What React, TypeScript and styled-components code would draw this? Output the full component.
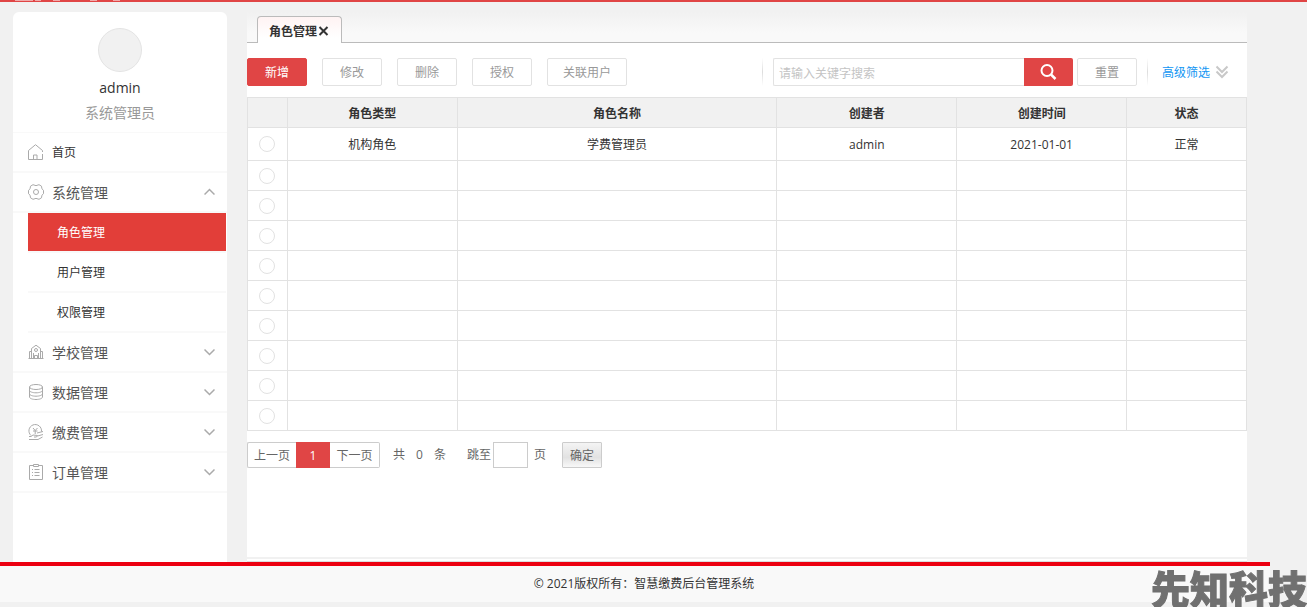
import React from "react";
import styled, { createGlobalStyle, css } from "styled-components";

const RED = "#e04545";
const LINE = "#e2e2e2";
const FAINT = "#f9f9f9";

const GlobalStyle = createGlobalStyle`
  *, *::before, *::after { box-sizing: border-box; }
  body {
    margin: 0;
    background: #f1f1f1;
    color: #333;
    font: 12px/20px "Open Sans", "Noto Sans CJK SC", sans-serif;
  }
  button, input { font: inherit; color: inherit; }
  button { cursor: pointer; }
  a { color: inherit; text-decoration: none; }
`;

const Page = styled.div`
  display: flex;
  flex-direction: column;
  min-height: 100vh;
  padding-bottom: 5px;
`;

const TopStrip = styled.header`
  height: 2px;
  background: ${RED};
  svg { display: block; }
`;

const Shell = styled.div`
  flex: 1;
  display: flex;
  gap: 20px;
  padding: 0 60px 0 13px;
`;

const Sidebar = styled.aside`
  flex: none;
  width: 214px;
  margin-top: 10px;
  background: #fff;
  border-radius: 6px 6px 0 0;
`;

const Profile = styled.div`
  display: flex;
  flex-direction: column;
  align-items: center;
  height: 120px;
  padding-top: 16px;
  font-size: 14px;
`;

const Avatar = styled.div`
  width: 44px;
  height: 44px;
  margin-bottom: 6px;
  border: 1px solid #e4e4e4;
  border-radius: 50%;
  background: #f1f1f1;
`;

const UserRole = styled.div`
  margin-top: 5px;
  color: #999;
`;

const MenuList = styled.ul`
  margin: 0;
  padding: 0;
  list-style: none;
  border-top: 1px solid ${FAINT};
`;

const MenuLink = styled.a<{ $small?: boolean }>`
  display: flex;
  align-items: center;
  height: 40px;
  padding: 0 12px 1px 15px;
  border-bottom: 2px solid ${FAINT};
  color: ${(p) => (p.$small ? "#333" : "#555")};
  font-size: ${(p) => (p.$small ? 12 : 14)}px;
`;

const MenuLabel = styled.span`
  flex: 1;
  margin-left: 8px;
  padding-top: 2px;
`;

const SubList = styled.ul`
  margin: 0 1px 0 15px;
  padding: 0;
  list-style: none;
`;

const SubLink = styled.a<{ $active?: boolean }>`
  display: flex;
  align-items: center;
  height: 40px;
  padding: 2px 0 0 29px;
  border-bottom: 2px solid ${FAINT};
  ${(p) =>
    p.$active &&
    css`
      background: #e23e39;
      background-clip: padding-box;
      color: #fff;
    `}
`;

const Main = styled.main`
  flex: 1;
  min-width: 0;
  display: flex;
  flex-direction: column;
  padding-top: 10px;
`;

const TabBar = styled.div`
  display: flex;
  align-items: flex-end;
  height: 31px;
  padding-left: 10px;
  border-bottom: 1px solid #bbb;
  background: linear-gradient(#f1f1f1, #f9f9f9 70%);
`;

const Tab = styled.div`
  display: flex;
  align-items: center;
  height: 27px;
  margin-bottom: -1px;
  padding: 4px 12px 0 11px;
  border: 1px solid #bbb;
  border-bottom: 0;
  border-radius: 4px 4px 0 0;
  background: linear-gradient(#fff3f3, #fff 80%);
  font-weight: bold;
`;

const TabClose = styled.button`
  display: flex;
  margin: 0 0 3px;
  padding: 0 0 0 1px;
  border: 0;
  background: none;
`;

const Content = styled.section`
  flex: 1;
  padding: 15px 0 20px;
  background: #fff;
`;

const ContentEdge = styled.div`
  height: 5px;
  background: #fff;
  border-top: 2px solid #f1f1f1;
  border-bottom: 1px solid #ddd;
`;

const Toolbar = styled.div`
  display: flex;
  justify-content: space-between;
  padding-right: 18px;
  margin-bottom: 11px;
`;

const ButtonGroup = styled.div`
  display: flex;
  gap: 15px;
`;

const ToolButton = styled.button<{ $primary?: boolean; $wide?: boolean }>`
  width: ${(p) => (p.$wide ? 80 : 60)}px;
  height: 28px;
  padding: 2px 0 0;
  border: 1px solid ${(p) => (p.$primary ? RED : LINE)};
  border-radius: 2px;
  background: ${(p) => (p.$primary ? RED : "#fff")};
  color: ${(p) => (p.$primary ? "#fff" : "#999")};
`;

const SearchGroup = styled.form`
  display: flex;
  align-items: center;
`;

const Separator = styled.span`
  width: 1px;
  height: 28px;
  background: linear-gradient(#fff, #ddd, #fff);
`;

const SearchInput = styled.input`
  width: 251px;
  height: 28px;
  margin-left: 10px;
  padding: 2px 5px 0;
  border: 1px solid ${LINE};
  border-right: 0;
  border-radius: 2px 0 0 2px;
  outline: 0;
  &::placeholder { color: #c4c4c4; opacity: 1; }
`;

const SearchButton = styled.button`
  display: flex;
  align-items: center;
  justify-content: center;
  width: 49px;
  height: 28px;
  margin-right: 4px;
  padding: 0;
  border: 0;
  border-radius: 0 2px 2px 0;
  background: ${RED};
`;

const AdvancedLink = styled.a`
  display: flex;
  align-items: center;
  gap: 5px;
  margin-left: 14px;
  color: #1296f3;
`;

const AdvancedLabel = styled.span`
  padding-top: 2px;
`;

const ResetSlot = styled.div`
  margin-right: 10px;
`;

const Table = styled.table`
  width: 100%;
  table-layout: fixed;
  border-collapse: collapse;
  text-align: center;
`;

const HeadCell = styled.th<{ $width: number }>`
  width: ${(p) => p.$width}%;
  height: 30px;
  padding: 2px 0 0;
  border: 1px solid ${LINE};
  background: #f1f1f1;
`;

const Cell = styled.td<{ $tall?: boolean }>`
  height: ${(p) => (p.$tall ? 33 : 30)}px;
  padding: 2px 0 0;
  border: 1px solid ${LINE};
`;

const RadioCell = styled(Cell)`
  padding: 0;
`;

const RowRadio = styled.input`
  appearance: none;
  display: block;
  width: 16px;
  height: 16px;
  margin: 0 auto;
  border: 1px solid #e2e2e2;
  border-radius: 50%;
  background: #fff;
  &:checked { background: ${RED}; }
`;

const Pager = styled.nav`
  display: flex;
  align-items: center;
  margin-top: 11px;
  color: #666;
`;

const PageButton = styled.button<{ $current?: boolean; $side?: "left" | "right" }>`
  width: ${(p) => (p.$current ? 34 : p.$side === "left" ? 49 : 50)}px;
  height: 26px;
  padding: 1px 0 0;
  border: 1px solid ${(p) => (p.$current ? RED : "#ccc")};
  border-radius: ${(p) => (p.$side === "left" ? "2px 0 0 2px" : p.$side === "right" ? "0 2px 2px 0" : "0")};
  border-right-width: ${(p) => (p.$side === "left" ? 0 : 1)}px;
  border-left-width: ${(p) => (p.$side === "right" ? 0 : 1)}px;
  background: ${(p) => (p.$current ? RED : "#fff")};
  color: ${(p) => (p.$current ? "#fff" : "#666")};
`;

const Total = styled.span`
  display: flex;
  gap: 11px;
  margin: 0 21px 0 13px;
`;

const JumpLabel = styled.label`
  display: flex;
  align-items: center;
`;

const JumpInput = styled.input`
  width: 35px;
  height: 26px;
  margin: 0 6px 0 2px;
  padding: 0 4px;
  border: 1px solid #ccc;
  outline: 0;
`;

const ConfirmButton = styled.button`
  width: 40px;
  height: 26px;
  margin-left: 16px;
  padding: 1px 0 0;
  border: 1px solid #ccc;
  border-radius: 1px;
  background: linear-gradient(#f4f4f4, #e2e2e2 60%, #f8f8f8);
`;

const Footer = styled.footer`
  height: 40px;
  margin-right: 37px;
  padding: 8px 0 0 18px;
  border-top: 4px solid #ec0011;
  background: #f9f9f9;
  text-align: center;
`;

const Watermark = styled.div`
  position: fixed;
  right: 0;
  bottom: 0;
  white-space: nowrap;
  pointer-events: none;
  color: #707070;
  font: 900 39px/40px "Noto Sans CJK SC", sans-serif;
  -webkit-text-stroke: 1px #707070;
`;

const Icon = ({ children }: { children: React.ReactNode }) => (
  <svg width="16" height="16" viewBox="0 0 16 16" fill="none" stroke="#aaa" strokeWidth="1" aria-hidden="true">
    {children}
  </svg>
);

const HomeIcon = () => (
  <Icon>
    <path d="M14.5 10v5.5H.5v-9L7.5.7l7 5.8v1.5M5.5 15.500v-4.500h3.500v4.500" />
  </Icon>
);

const GearIcon = () => (
  <Icon>
    <path d="M5 .7 Q8 2.600 11 .7 L13.500 2.200 Q13.300 5.200 15.500 6.300 V9.700 Q13.300 10.800 13.500 13.800 L11 15.300 Q8 13.400 5 15.300 L2.500 13.800 Q2.700 10.800.5 9.700 V6.300 Q2.700 5.200 2.500 2.200 Z" />
    <circle cx="8" cy="8" r="2.500" />
  </Icon>
);

const SchoolIcon = () => (
  <Icon>
    <path d="M3.500 14.500V4.500L8 1.200l4.500 3.300v10M3.500 7.500h-2v7M12.500 7.500h2v7M.5 14.500h15M6.500 14.500v-3h3v3M5.500 9v5M10.500 9v5" />
    <circle cx="8" cy="6" r="1.500" />
  </Icon>
);

const DataIcon = () => (
  <Icon>
    <ellipse cx="8" cy="3" rx="6.500" ry="2.500" />
    <path d="M1.500 3v10c0 1.400 2.900 2.500 6.500 2.500s6.500-1.100 6.500-2.500V3M1.500 6.300c0 1.400 2.900 2.500 6.500 2.500s6.500-1.100 6.500-2.500M1.500 9.700c0 1.400 2.900 2.500 6.500 2.500s6.500-1.100 6.500-2.500" />
  </Icon>
);

const PaymentIcon = () => (
  <Icon>
    <path d="M3 11.500A6.300 6.300 0 1 1 13.500 7.500M5 4l2.200 2.500L9.500 4M7.200 6.500v3.500M5 7h4.500M1 12.500h2l2-1.500 4.500.5-1 1.500H6M9.500 12l5.500-1.500M9 9l6-1.500M1 15.500h9l4.500-2.500" />
  </Icon>
);

const OrderIcon = () => (
  <Icon>
    <path d="M5 1.500H1.500v14h13v-14H11M5.500.5h5v2h-5zM4 5.500h1M6.500 5.500h5M4 8.500h1M6.500 8.500h5M4 11.500h1M6.500 11.500h5" />
  </Icon>
);

const Chevron = ({ up }: { up?: boolean }) => (
  <svg width="11" height="8" viewBox="0 0 11 8" fill="none" stroke="#aaa" strokeWidth="1.500" aria-hidden="true">
    <path d={up ? "M.5 6.500l5-5 5 5" : "M.5 1.500l5 5 5-5"} />
  </svg>
);

const subItems = ["角色管理", "用户管理", "权限管理"];
const groups = [
  { label: "系统管理", icon: <GearIcon />, open: true },
  { label: "学校管理", icon: <SchoolIcon /> },
  { label: "数据管理", icon: <DataIcon /> },
  { label: "缴费管理", icon: <PaymentIcon /> },
  { label: "订单管理", icon: <OrderIcon /> },
];

const columns = [
  { title: "", width: 4 },
  { title: "角色类型", width: 17 },
  { title: "角色名称", width: 32 },
  { title: "创建者", width: 18 },
  { title: "创建时间", width: 17 },
  { title: "状态", width: 12 },
];
const emptyRow = ["", "", "", "", ""];
const rows = [
  ["机构角色", "学费管理员", "admin", "2021-01-01", "正常"],
  ...Array.from({ length: 9 }, () => emptyRow),
];

export default function App() {
  return (
    <>
      <GlobalStyle />
      <Page>
        <TopStrip>
          <svg width="130" height="2" aria-hidden="true">
            <path d="M15 .5h18M35 .5h6M53 .5h7M90 .5h7M113 .5h7" stroke="#f0a9a9" />
          </svg>
        </TopStrip>
        <Shell>
          <Sidebar>
            <Profile>
              <Avatar />
              <div>admin</div>
              <UserRole>系统管理员</UserRole>
            </Profile>
            <MenuList>
              <li>
                <MenuLink href="#home" $small>
                  <HomeIcon />
                  <MenuLabel>首页</MenuLabel>
                </MenuLink>
              </li>
              {groups.map((g) => (
                <li key={g.label}>
                  <MenuLink href="#group">
                    {g.icon}
                    <MenuLabel>{g.label}</MenuLabel>
                    <Chevron up={g.open} />
                  </MenuLink>
                  {g.open && (
                    <SubList>
                      {subItems.map((s, i) => (
                        <li key={s}>
                          <SubLink href="#item" $active={i === 0}>{s}</SubLink>
                        </li>
                      ))}
                    </SubList>
                  )}
                </li>
              ))}
            </MenuList>
          </Sidebar>
          <Main>
            <TabBar>
              <Tab>
                角色管理
                <TabClose type="button" aria-label="关闭">
                  <svg width="11" height="10" viewBox="0 0 11 10" stroke="#333" strokeWidth="2" aria-hidden="true">
                    <path d="M1.500 1l8 8M9.500 1l-8 8" />
                  </svg>
                </TabClose>
              </Tab>
            </TabBar>
            <Content>
              <Toolbar>
                <ButtonGroup>
                  <ToolButton type="button" $primary>新增</ToolButton>
                  <ToolButton type="button">修改</ToolButton>
                  <ToolButton type="button">删除</ToolButton>
                  <ToolButton type="button">授权</ToolButton>
                  <ToolButton type="button" $wide>关联用户</ToolButton>
                </ButtonGroup>
                <SearchGroup onSubmit={(e) => e.preventDefault()}>
                  <Separator />
                  <SearchInput type="text" aria-label="关键字" placeholder="请输入关键字搜索" />
                  <SearchButton type="submit" aria-label="搜索">
                    <svg width="18" height="18" viewBox="0 0 18 18" fill="none" stroke="#fff" strokeWidth="2" aria-hidden="true">
                      <circle cx="8" cy="7.500" r="5.500" />
                      <path d="M12 11.500l4.500 4.500" strokeWidth="2.500" />
                    </svg>
                  </SearchButton>
                  <ResetSlot>
                    <ToolButton type="reset">重置</ToolButton>
                  </ResetSlot>
                  <Separator />
                  <AdvancedLink href="#advanced">
                    <AdvancedLabel>高级筛选</AdvancedLabel>
                    <svg width="14" height="14" viewBox="0 0 14 14" fill="none" stroke="#c8c8c8" strokeWidth="2" aria-hidden="true">
                      <path d="M1.500 1.500L7 7l5.500-5.500M1.500 6.500L7 12l5.500-5.500" />
                    </svg>
                  </AdvancedLink>
                </SearchGroup>
              </Toolbar>
              <Table>
                <thead>
                  <tr>
                    {columns.map((c, i) => (
                      <HeadCell key={i} $width={c.width}>{c.title}</HeadCell>
                    ))}
                  </tr>
                </thead>
                <tbody>
                  {rows.map((row, r) => (
                    <tr key={r}>
                      <RadioCell $tall={r === 0}>
                        <RowRadio type="radio" name="row" aria-label={`第${r + 1}行`} />
                      </RadioCell>
                      {row.map((text, i) => (
                        <Cell key={i}>{text}</Cell>
                      ))}
                    </tr>
                  ))}
                </tbody>
              </Table>
              <Pager>
                <PageButton type="button" $side="left">上一页</PageButton>
                <PageButton type="button" $current>1</PageButton>
                <PageButton type="button" $side="right">下一页</PageButton>
                <Total>
                  <span>共</span>
                  <span>0</span>
                  <span>条</span>
                </Total>
                <JumpLabel>
                  跳至
                  <JumpInput type="text" />
                  页
                </JumpLabel>
                <ConfirmButton type="button">确定</ConfirmButton>
              </Pager>
            </Content>
            <ContentEdge />
          </Main>
        </Shell>
        <Footer>© 2021版权所有：智慧缴费后台管理系统</Footer>
      </Page>
      <Watermark>先知科技</Watermark>
    </>
  );
}
